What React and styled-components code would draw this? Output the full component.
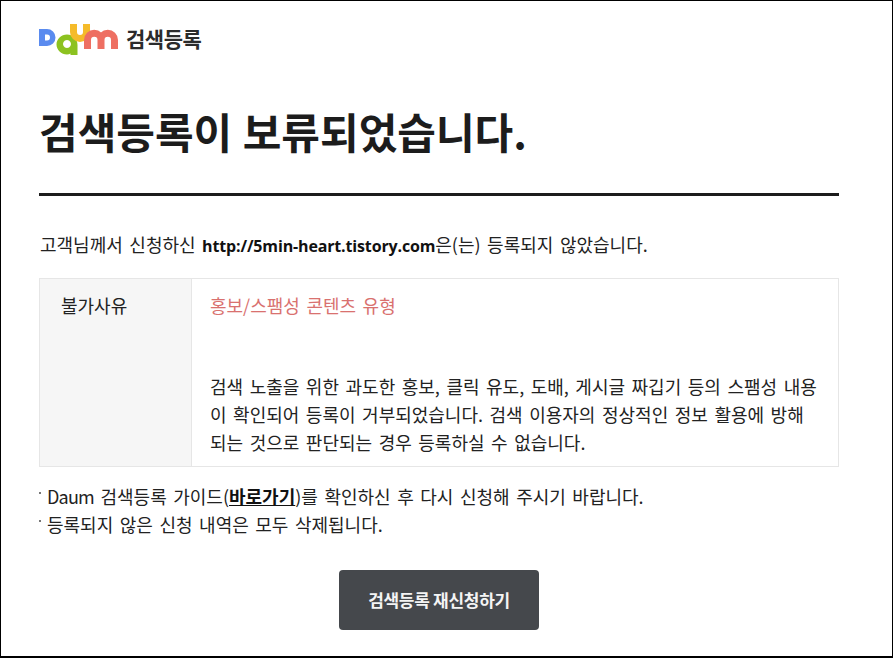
import React from 'react';
import styled, { createGlobalStyle } from 'styled-components';

const GlobalStyle = createGlobalStyle`
  html, body {
    margin: 0;
    padding: 0;
    background: #fff;
  }
  * {
    box-sizing: border-box;
  }
`;

const DaumLogo = () => (
  <svg width="80" height="31" viewBox="0 0 80 31" aria-label="Daum">
    <path d="M0 5h8a8.500 8.500 0 0 1 0 17H0z M6 10.500v6h2a3 3 0 0 0 0-6z" fill="#5a8bef" fillRule="evenodd" />
    <path d="M28 10.500c5.800 0 10.500 4.500 10.500 10.500v10h-7v-1.500c-1 .7-2.200 1-3.500 1-5.800 0-10.500-4.700-10.500-10s4.700-10 10.500-10z M28 16a4 4 0 1 0 .01 0z" fill="#8cc220" fillRule="evenodd" />
    <path d="M34.500 0V8a6.500 6.500 0 0 0 13 0V0" fill="none" stroke="#f5bb2a" strokeWidth="7" />
    <path d="M48.500 25V16a6.750 6.750 0 0 1 13.500 0V25 M62 16a6.750 6.750 0 0 1 13.500 0V25" fill="none" stroke="#ee6f62" strokeWidth="7" />
  </svg>
);

const Page = () => (
  <Frame>
    <GlobalStyle />
    <Header>
      <DaumLogo />
      <ServiceName>검색등록</ServiceName>
    </Header>
    <Title>검색등록이 보류되었습니다.</Title>
    <Lead>
      고객님께서 신청하신 <strong>http://5min-heart.tistory.com</strong>은(는) 등록되지 않았습니다.
    </Lead>
    <ReasonTable>
      <ReasonLabel>불가사유</ReasonLabel>
      <ReasonBody>
        <ReasonTitle>홍보/스팸성 콘텐츠 유형</ReasonTitle>
        <ReasonText>
          검색 노출을 위한 과도한 홍보, 클릭 유도, 도배, 게시글 짜깁기 등의 스팸성 내용
          <br />
          이 확인되어 등록이 거부되었습니다. 검색 이용자의 정상적인 정보 활용에 방해
          <br />
          되는 것으로 판단되는 경우 등록하실 수 없습니다.
        </ReasonText>
      </ReasonBody>
    </ReasonTable>
    <Notes>
      <li>
        <Brand>Daum</Brand> 검색등록 가이드(<GuideLink href="#">바로가기</GuideLink>)를 확인하신 후 다시 신청해 주시기 바랍니다.
      </li>
      <li>등록되지 않은 신청 내역은 모두 삭제됩니다.</li>
    </Notes>
    <ButtonRow>
      <RetryButton type="button">검색등록 재신청하기</RetryButton>
    </ButtonRow>
  </Frame>
);

export default Page;

const Frame = styled.div`
  width: 893px;
  height: 658px;
  overflow: hidden;
  border: 1px solid #000;
  border-bottom-width: 2px;
  padding: 0 53px 0 38px;
  background: #fff;
  color: #222;
  font-family: "Noto Sans CJK KR", "Noto Sans", sans-serif;
  font-size: 18px;
  word-spacing: 2.5px;
`;

const Header = styled.div`
  display: flex;
  align-items: center;
  gap: 7px;
  height: 31px;
  margin-top: 23px;
`;

const ServiceName = styled.span`
  padding-bottom: 4px;
  font-size: 21px;
  font-weight: 700;
  letter-spacing: -0.5px;
  color: #2b2b2b;
`;

const Title = styled.h1`
  margin: 45px 0 0;
  height: 93px;
  font-size: 42px;
  line-height: 62px;
  font-weight: 700;
  letter-spacing: 0;
  word-spacing: 1px;
  color: #1c1c1c;
`;

const Lead = styled.p`
  margin: 0;
  padding: 35px 0 0 1px;
  border-top: 3px solid #1c1c1c;
  line-height: 26px;

  strong {
    font-family: "Open Sans", sans-serif;
    font-weight: 700;
    font-size: 16px;
    letter-spacing: -0.15px;
    color: #111;
  }
`;

const ReasonTable = styled.div`
  display: grid;
  grid-template-columns: 152px 1fr;
  height: 189px;
  margin-top: 19px;
  border: 1px solid #e6e6e6;
`;

const ReasonLabel = styled.div`
  padding: 13px 0 0 21px;
  background: #f6f6f6;
  border-right: 1px solid #e6e6e6;
  line-height: 27px;
`;

const ReasonBody = styled.div`
  padding: 13px 18px 0;
`;

const ReasonTitle = styled.div`
  line-height: 27px;
  color: #d9716f;
`;

const ReasonText = styled.div`
  margin-top: 53px;
  line-height: 28px;
  white-space: nowrap;
`;

const Notes = styled.ul`
  margin: 15px 0 0;
  padding: 0;
  list-style: none;
  line-height: 28px;

  li {
    position: relative;
    padding-left: 8px;
    white-space: nowrap;
  }

  li::before {
    content: "";
    position: absolute;
    left: 0;
    top: 10px;
    width: 2px;
    height: 2px;
    background: #777;
  }
`;

const Brand = styled.span`
  letter-spacing: -0.8px;
`;

const GuideLink = styled.a`
  color: #111;
  font-weight: 700;
  text-decoration: underline;
`;

const ButtonRow = styled.div`
  display: flex;
  justify-content: center;
  margin-top: 32px;
`;

const RetryButton = styled.button`
  width: 200px;
  height: 60px;
  padding-bottom: 3px;
  border: 0;
  border-radius: 4px;
  background: #45484c;
  color: #f4f4f4;
  font-family: inherit;
  font-size: 17px;
  font-weight: 700;
  letter-spacing: -0.3px;
  cursor: pointer;
`;
